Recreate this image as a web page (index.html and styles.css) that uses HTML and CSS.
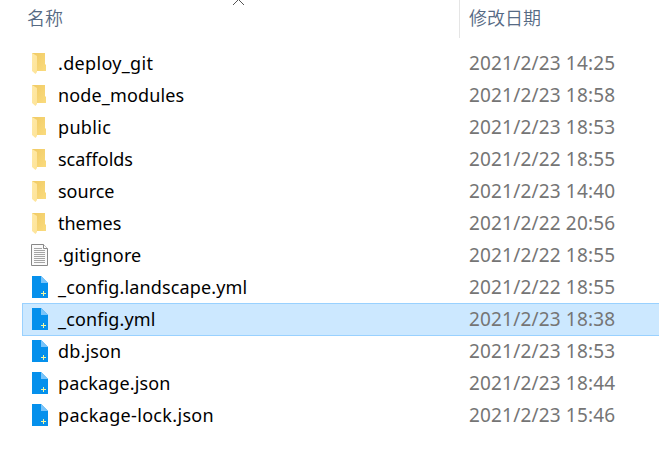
FILE: index.html
```
<!DOCTYPE html>
<html lang="zh-CN">
<head>
<meta charset="utf-8">
<title>文件列表</title>
<link rel="stylesheet" href="styles.css">
</head>
<body>
<svg class="defs" width="0" height="0" aria-hidden="true">
  <defs>
    <linearGradient id="back" x1="0" y1="0" x2="1" y2="1"><stop offset="0" stop-color="#f0ca64"/><stop offset="1" stop-color="#fadb7e"/></linearGradient>
    <linearGradient id="flap" x1="0" y1="0" x2="1" y2="1"><stop offset="0" stop-color="#ffe9a6"/><stop offset="1" stop-color="#fde398"/></linearGradient>
    <symbol id="folder" viewBox="0 0 18 24">
      <path fill="url(#back)" d="M1 1H14V12L15 13V19H5L1 17Z"/>
      <path fill="url(#flap)" d="M1 1L6 4V20L4.5 22L1 19Z"/>
    </symbol>
    <symbol id="text" viewBox="0 0 18 24">
      <path fill="#fafafa" stroke="#888" d="M.5 .5H12.5L16.5 4.5V21.5H.5Z"/>
      <path fill="#fff" stroke="#888" d="M12.5 .5V4.5H16.5"/>
      <path stroke="#a4a4a4" d="M3 4.5H11M3 6.5H14M3 8.5H14M3 10.5H14M3 12.5H14M3 14.5H14M3 16.5H14M3 18.5H14"/>
    </symbol>
    <symbol id="code" viewBox="0 0 18 24">
      <path fill="#0590ec" d="M1 0H10L17 7V22H1Z"/>
      <path fill="#78c4fa" d="M10 0L17 7H10Z"/>
      <path stroke="#f4f8a0" d="M12.5 15V20M10 17.5H15"/>
    </symbol>
  </defs>
</svg>
<div class="list">
  <header class="head">
    <div class="col name-head">名称<svg class="sort" width="13" height="7" viewBox="0 0 13 7"><path d="M1 5L6.5 -.5L12 5" fill="none" stroke="#555"/></svg></div>
    <div class="col date-head">修改日期</div>
  </header>
  <main class="rows">
    <div class="row"><svg class="icon"><use href="#folder"/></svg><span class="name wide">.deploy_git</span><time>2021/2/23 14:25</time></div>
    <div class="row"><svg class="icon"><use href="#folder"/></svg><span class="name medium">node_modules</span><time>2021/2/23 18:58</time></div>
    <div class="row"><svg class="icon"><use href="#folder"/></svg><span class="name wide">public</span><time>2021/2/23 18:53</time></div>
    <div class="row"><svg class="icon"><use href="#folder"/></svg><span class="name">scaffolds</span><time>2021/2/22 18:55</time></div>
    <div class="row"><svg class="icon"><use href="#folder"/></svg><span class="name">source</span><time>2021/2/23 14:40</time></div>
    <div class="row"><svg class="icon"><use href="#folder"/></svg><span class="name">themes</span><time>2021/2/22 20:56</time></div>
    <div class="row"><svg class="icon"><use href="#text"/></svg><span class="name medium">.gitignore</span><time>2021/2/22 18:55</time></div>
    <div class="row"><svg class="icon"><use href="#code"/></svg><span class="name medium">_config.landscape.yml</span><time>2021/2/22 18:55</time></div>
    <div class="row selected"><svg class="icon"><use href="#code"/></svg><span class="name medium">_config.yml</span><time>2021/2/23 18:38</time></div>
    <div class="row"><svg class="icon"><use href="#code"/></svg><span class="name medium">db.json</span><time>2021/2/23 18:53</time></div>
    <div class="row"><svg class="icon"><use href="#code"/></svg><span class="name medium">package.json</span><time>2021/2/23 18:44</time></div>
    <div class="row"><svg class="icon"><use href="#code"/></svg><span class="name wide">package-lock.json</span><time>2021/2/23 15:46</time></div>
  </main>
</div>
</body>
</html>
```
FILE: styles.css
```
* { box-sizing: border-box; }
body {
  margin: 0;
  overflow: hidden;
  background: #fff;
  color: #000;
  font-family: "Noto Sans", "Noto Sans CJK SC", sans-serif;
}
.defs { position: absolute; }
.list { height: 449px; padding-left: 22px; }
.head {
  display: grid;
  grid-template-columns: 438px 1fr;
  height: 38px;
  color: #566a84;
  font: 350 18px/34px "Noto Sans CJK SC", sans-serif;
}
.col { position: relative; }
.name-head { padding-left: 5px; border-right: 1px solid #e5e5e5; }
.date-head { padding-left: 9px; }
.sort { position: absolute; left: 210px; top: 0; }
.rows { padding-top: 9px; }
.row {
  display: grid;
  grid-template-columns: 27px 411px 1fr;
  align-items: center;
  height: 33px;
  margin-bottom: -1px;
  padding-left: 8px;
  border: 1px solid transparent;
  border-right: 0;
  font-size: 18px;
  line-height: 31px;
  white-space: nowrap;
}
.selected { background: #cce8ff; border-color: #99d1ff; }
.icon { display: block; width: 18px; height: 24px; }
.name { letter-spacing: 0; }
.medium { letter-spacing: .14px; }
.wide { letter-spacing: .33px; }
time { color: #757575; font-size: 19px; letter-spacing: .17px; }
```
